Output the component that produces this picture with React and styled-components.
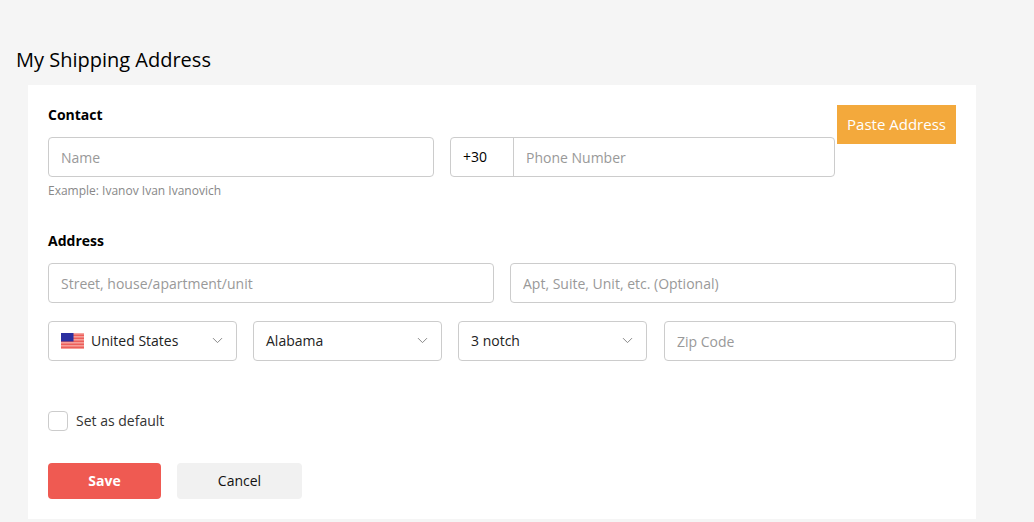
import styled, { createGlobalStyle } from "styled-components";
import { ChevronDown } from "lucide-react";

const Global = createGlobalStyle`
  html, body {
    margin: 0;
    padding: 0;
    background: #f5f5f5;
    font-family: "Open Sans", "Noto Sans", sans-serif;
    overflow: hidden;
  }
  * { box-sizing: border-box; }
`;

const Page = styled.div`
  width: 1034px;
  height: 522px;
  padding-top: 44px;
`;

const Title = styled.h1`
  margin: 0 0 9px 16px;
  font-size: 20px;
  line-height: 32px;
  font-weight: 400;
  color: #000;
`;

const Card = styled.div`
  width: 948px;
  height: 434px;
  margin-left: 28px;
  padding: 20px;
  background: #fff;
`;

const ContactWrap = styled.div`
  display: flex;
  align-items: flex-start;
  justify-content: space-between;
`;

const ContactFields = styled.div`
  width: 787px;
`;

const Label = styled.div`
  font-size: 14px;
  line-height: 20px;
  font-weight: 700;
  color: #000;
  margin-bottom: 12px;
`;

const Row = styled.div`
  display: flex;
  gap: 16px;
  margin-bottom: ${(p) => p.$mb || 0}px;
`;

const Field = styled.div`
  flex: 1;
  min-width: 0;
`;

const NameField = styled.div`
  width: 386px;
  flex: none;
`;

const ZipField = styled.div`
  flex: 1;
  min-width: 0;
  margin-left: 1px;
`;

const Input = styled.input`
  display: block;
  width: 100%;
  height: 40px;
  padding: 0 12px;
  border: 1px solid #ccc;
  border-radius: 4px;
  outline: none;
  background: #fff;
  font: 400 14px "Open Sans", sans-serif;
  color: #000;
  &::placeholder { color: #999; opacity: 1; }
`;

const Hint = styled.div`
  margin-top: 5px;
  font-size: 12px;
  line-height: 18px;
  color: #888;
`;

const PhoneBox = styled.div`
  flex: 1;
  display: flex;
  height: 40px;
  border: 1px solid #ccc;
  border-radius: 4px;
`;

const Prefix = styled.div`
  width: 63px;
  flex: none;
  padding-left: 12px;
  border-right: 1px solid #ccc;
  font-size: 14px;
  line-height: 38px;
  color: #000;
`;

const PhoneInput = styled.input`
  flex: 1;
  min-width: 0;
  padding: 0 12px;
  border: 0;
  outline: none;
  background: transparent;
  font: 400 14px "Open Sans", sans-serif;
  &::placeholder { color: #999; opacity: 1; }
`;

const PasteButton = styled.button`
  width: 119px;
  height: 39px;
  padding: 0 0 2px;
  border: 0;
  background: #f3a93c;
  color: #fff;
  font: 400 15px "Open Sans", sans-serif;
`;

const AddressSection = styled.div`
  margin-top: 31px;
`;

const SelectBox = styled.div`
  width: 189px;
  height: 40px;
  flex: none;
  display: flex;
  align-items: center;
  gap: 7px;
  padding: 0 12px 1px;
  border: 1px solid #ccc;
  border-radius: 4px;
  font-size: 14px;
  color: #222;
`;

const SelectText = styled.span`
  flex: 1;
`;

const Chevron = styled(ChevronDown)`
  width: 17px;
  height: 17px;
  color: #888;
  stroke-width: 1.4;
  margin-right: -2px;
`;

const CheckRow = styled.label`
  display: flex;
  align-items: center;
  gap: 8px;
  margin-top: 50px;
  font-size: 14px;
  line-height: 20px;
  color: #333;
`;

const CheckBox = styled.span`
  width: 20px;
  height: 20px;
  border: 1px solid #ccc;
  border-radius: 4px;
`;

const Actions = styled.div`
  display: flex;
  gap: 16px;
  margin-top: 32px;
`;

const ActionButton = styled.button`
  width: ${(p) => p.$w}px;
  height: 36px;
  padding: 0 0 1px;
  border: 0;
  border-radius: 4px;
  background: ${(p) => (p.$primary ? "#ef5a52" : "#f1f1f1")};
  color: ${(p) => (p.$primary ? "#fff" : "#111")};
  font: ${(p) => (p.$primary ? 700 : 400)} 14px "Open Sans", sans-serif;
`;

const UsFlag = () => (
  <svg width="23" height="16" viewBox="0 0 23 16" style={{ flex: "none" }}>
    <rect width="23" height="16" fill="#f6a5a0" />
    {[1.5, 4.5, 7.5, 10.5, 13.5].map((y) => (
      <rect key={y} y={y} width="23" height="1.6" fill="#ec5f5a" />
    ))}
    <rect width="12.5" height="8.5" fill="#2b2fa0" />
  </svg>
);

export default function App() {
  return (
    <Page>
      <Global />
      <Title>My Shipping Address</Title>
      <Card>
        <ContactWrap>
          <ContactFields>
            <Label>Contact</Label>
            <Row>
              <NameField>
                <Input placeholder="Name" />
                <Hint>Example: Ivanov Ivan Ivanovich</Hint>
              </NameField>
              <PhoneBox>
                <Prefix>+30</Prefix>
                <PhoneInput placeholder="Phone Number" />
              </PhoneBox>
            </Row>
          </ContactFields>
          <PasteButton>Paste Address</PasteButton>
        </ContactWrap>

        <AddressSection>
          <Label>Address</Label>
          <Row $mb={18}>
            <Field>
              <Input placeholder="Street, house/apartment/unit" />
            </Field>
            <Field>
              <Input placeholder="Apt, Suite, Unit, etc. (Optional)" />
            </Field>
          </Row>
          <Row>
            <SelectBox>
              <UsFlag />
              <SelectText>United States</SelectText>
              <Chevron />
            </SelectBox>
            <SelectBox>
              <SelectText>Alabama</SelectText>
              <Chevron />
            </SelectBox>
            <SelectBox>
              <SelectText>3 notch</SelectText>
              <Chevron />
            </SelectBox>
            <ZipField>
              <Input placeholder="Zip Code" />
            </ZipField>
          </Row>
        </AddressSection>

        <CheckRow>
          <CheckBox />
          Set as default
        </CheckRow>

        <Actions>
          <ActionButton $primary $w={113}>Save</ActionButton>
          <ActionButton $w={125}>Cancel</ActionButton>
        </Actions>
      </Card>
    </Page>
  );
}
